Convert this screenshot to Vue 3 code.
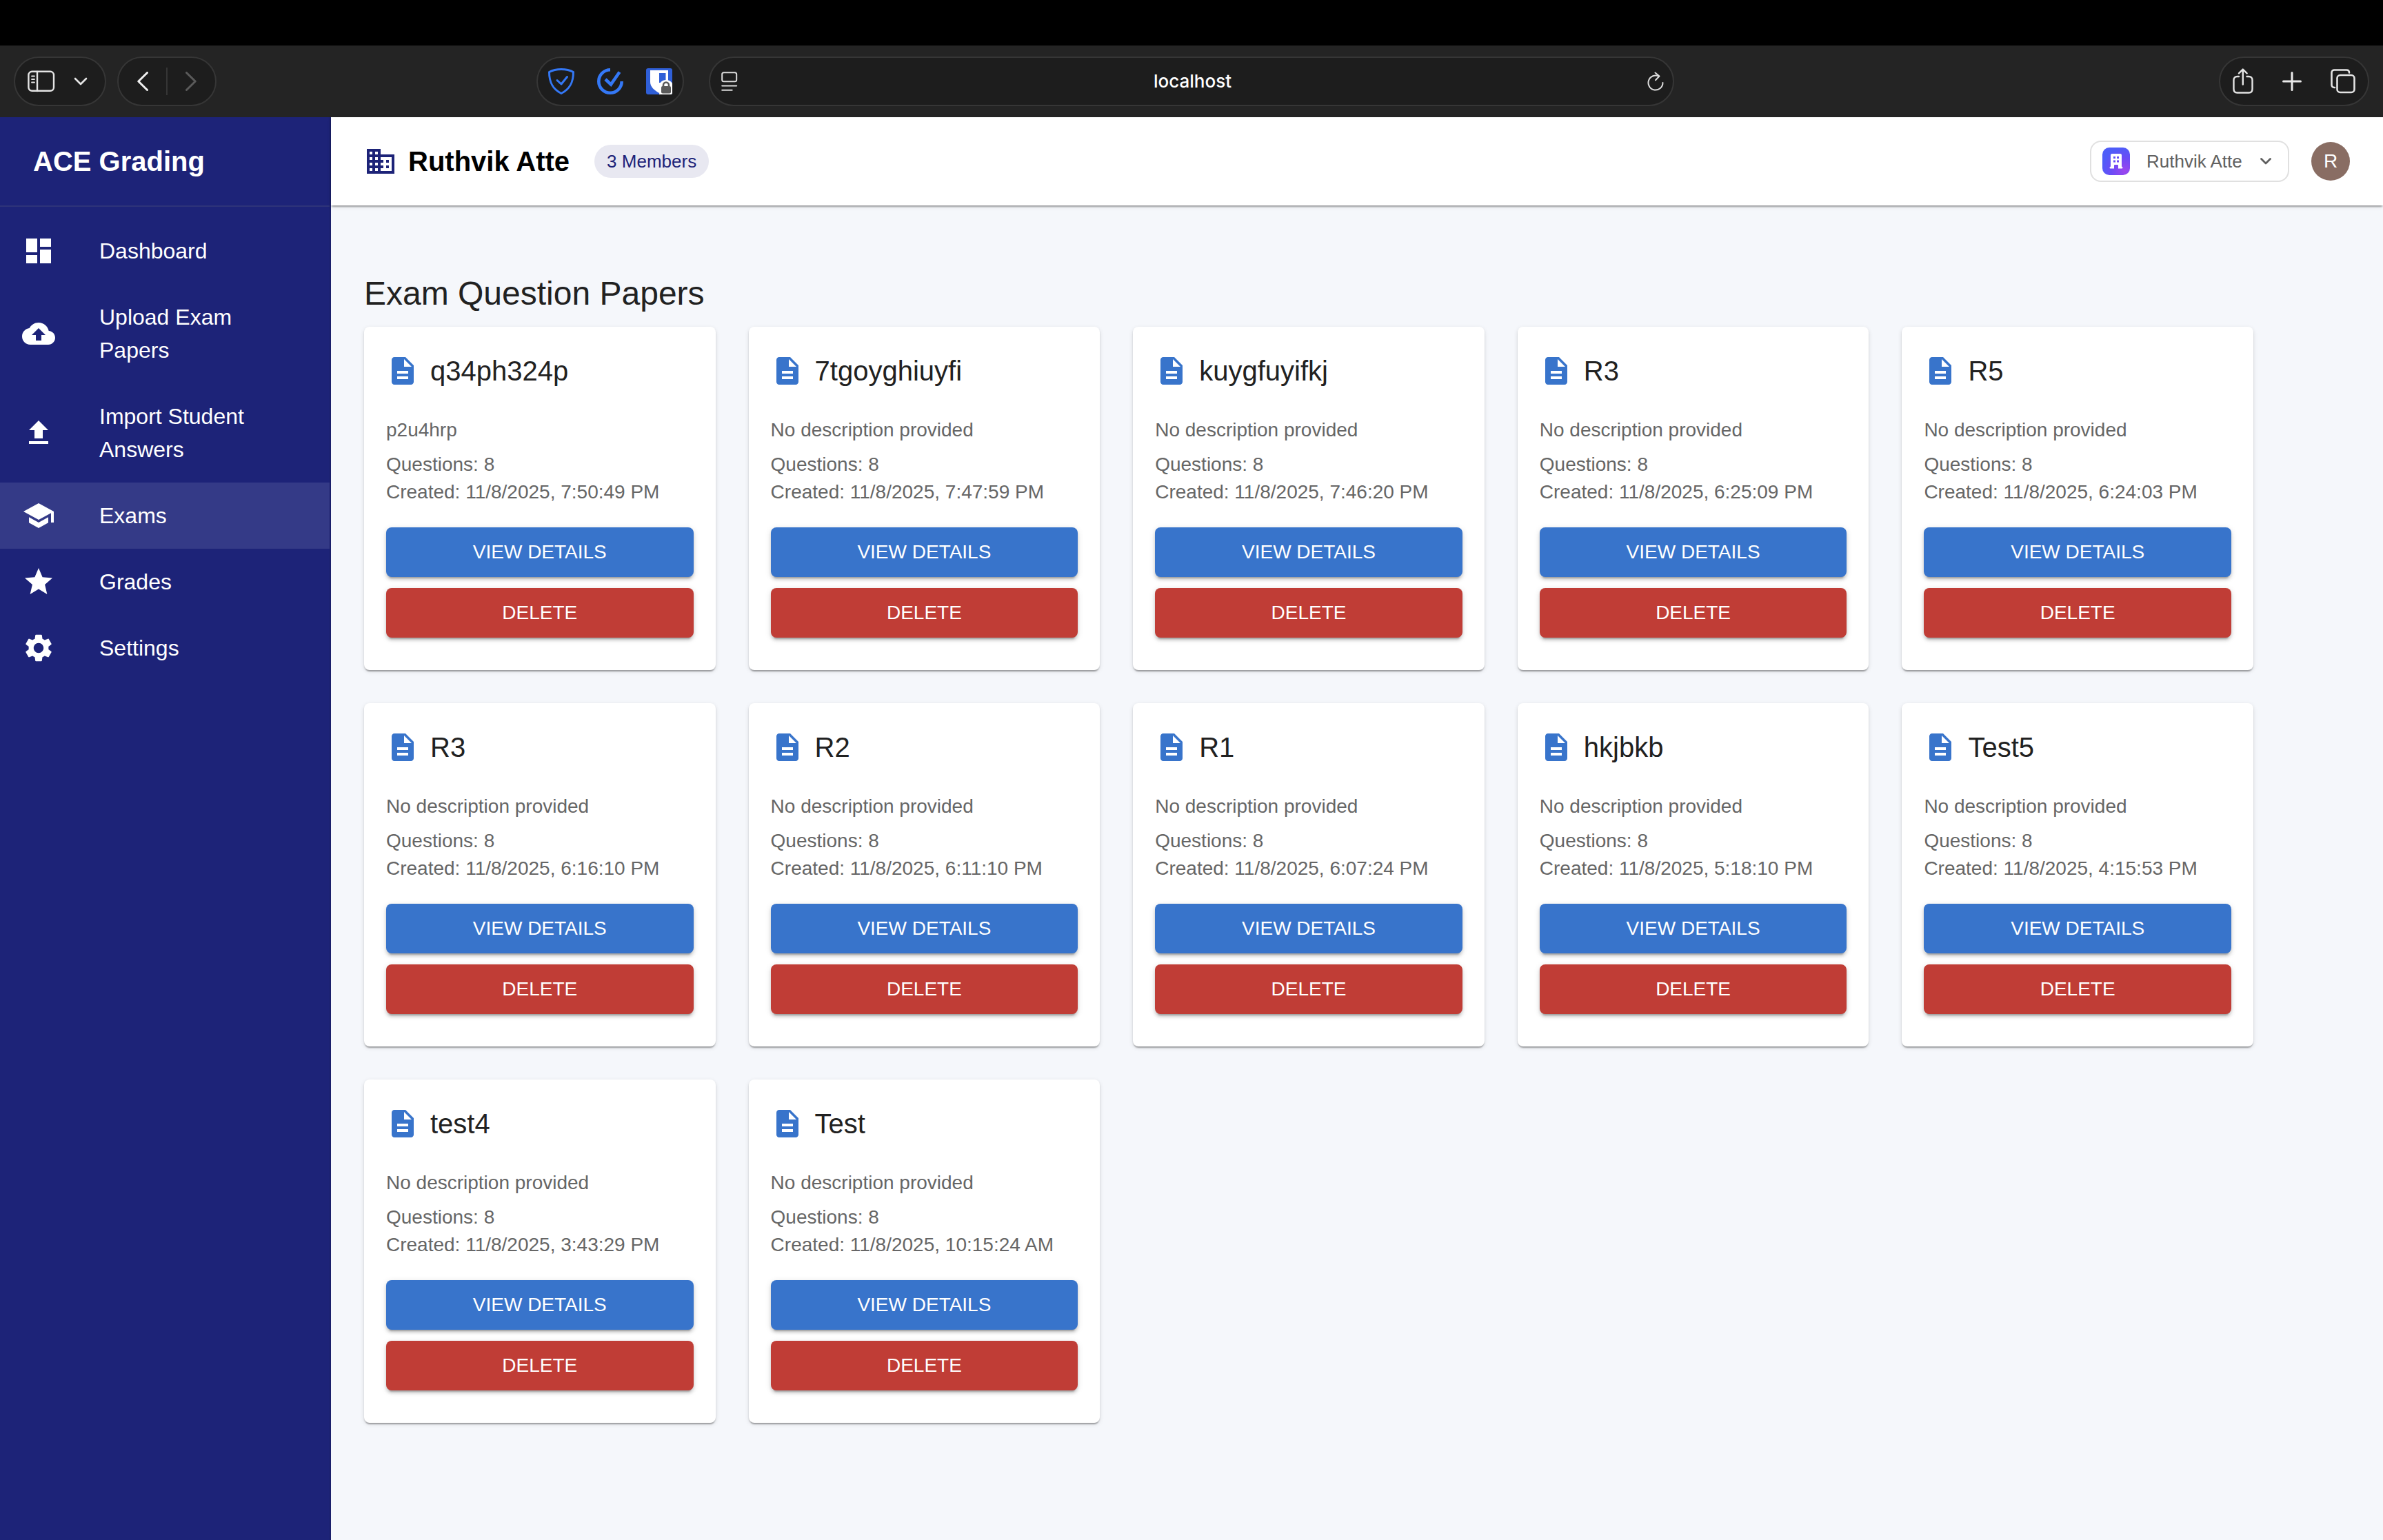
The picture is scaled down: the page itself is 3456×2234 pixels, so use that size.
<script setup>
import { ref } from 'vue'

const navItems = [
  { label: 'Dashboard', icon: 'M3 13h8V3H3zm0 8h8v-6H3zm10 0h8V11h-8zm0-18v6h8V3z' },
  { label: 'Upload Exam Papers', icon: 'M19.35 10.04C18.67 6.59 15.64 4 12 4 9.11 4 6.6 5.64 5.35 8.04 2.34 8.36 0 10.91 0 14c0 3.31 2.69 6 6 6h13c2.76 0 5-2.24 5-5 0-2.64-2.05-4.78-4.65-4.96M14 13v4h-4v-4H7l5-5 5 5z' },
  { label: 'Import Student Answers', icon: 'M5 20h14v-2H5zm0-10h4v6h6v-6h4l-7-7z' },
  { label: 'Exams', active: true, icon: 'M5 13.18v4L12 21l7-3.82v-4L12 17zM12 3 1 9l11 6 9-4.91V17h2V9z' },
  { label: 'Grades', icon: 'M12 17.27 18.18 21l-1.64-7.03L22 9.24l-7.19-.61L12 2 9.19 8.63 2 9.24l5.46 4.73L5.82 21z' },
  { label: 'Settings', icon: 'M19.14 12.94c.04-.3.06-.61.06-.94 0-.32-.02-.64-.07-.94l2.03-1.58c.18-.14.23-.41.12-.61l-1.92-3.32c-.12-.22-.37-.29-.59-.22l-2.39.96c-.5-.38-1.03-.7-1.62-.94l-.36-2.54c-.04-.24-.24-.41-.48-.41h-3.84c-.24 0-.43.17-.47.41l-.36 2.54c-.59.24-1.13.57-1.62.94l-2.39-.96c-.22-.08-.47 0-.59.22L2.74 8.87c-.12.21-.08.47.12.61l2.03 1.58c-.05.3-.09.63-.09.94s.02.64.07.94l-2.03 1.58c-.18.14-.23.41-.12.61l1.92 3.32c.12.22.37.29.59.22l2.39-.96c.5.38 1.03.7 1.62.94l.36 2.54c.05.24.24.41.48.41h3.84c.24 0 .44-.17.47-.41l.36-2.54c.59-.24 1.13-.56 1.62-.94l2.39.96c.22.08.47 0 .59-.22l1.92-3.32c.12-.22.07-.47-.12-.61zM12 15.6c-1.98 0-3.6-1.62-3.6-3.6s1.62-3.6 3.6-3.6 3.6 1.62 3.6 3.6-1.62 3.6-3.6 3.6' },
]

const fallback = 'No description provided'
const exams = [
  { title: 'q34ph324p', description: 'p2u4hrp', created: '11/8/2025, 7:50:49 PM' },
  { title: '7tgoyghiuyfi', created: '11/8/2025, 7:47:59 PM' },
  { title: 'kuygfuyifkj', created: '11/8/2025, 7:46:20 PM' },
  { title: 'R3', created: '11/8/2025, 6:25:09 PM' },
  { title: 'R5', created: '11/8/2025, 6:24:03 PM' },
  { title: 'R3', created: '11/8/2025, 6:16:10 PM' },
  { title: 'R2', created: '11/8/2025, 6:11:10 PM' },
  { title: 'R1', created: '11/8/2025, 6:07:24 PM' },
  { title: 'hkjbkb', created: '11/8/2025, 5:18:10 PM' },
  { title: 'Test5', created: '11/8/2025, 4:15:53 PM' },
  { title: 'test4', created: '11/8/2025, 3:43:29 PM' },
  { title: 'Test', created: '11/8/2025, 10:15:24 AM' },
]

const address = ref('localhost')
const organization = ref('Ruthvik Atte')
</script>

<template>
  <div class="screen">
    <div class="notch-strip"></div>

    <div class="browser-bar">
      <div class="bar-left">
        <div class="pill pill-sidebar">
          <button type="button" aria-label="Show sidebar">
            <svg width="40" height="32" viewBox="0 0 40 32" fill="none" stroke="#e4e4e4" stroke-width="2.4" stroke-linecap="round">
              <rect x="1.4" y="1.8" width="36.6" height="28" rx="5" />
              <path d="M14 2v28" />
              <path d="M6 8.5h4M6 13h4M6 17.500h4" stroke-width="1.800" />
            </svg>
          </button>
          <button type="button" aria-label="Tab groups">
            <svg width="20" height="12" viewBox="0 0 20 12" fill="none" stroke="#e4e4e4" stroke-width="2.600" stroke-linecap="round" stroke-linejoin="round">
              <path d="M2 2l8 8 8-8" />
            </svg>
          </button>
        </div>
        <div class="pill pill-history">
          <button type="button" aria-label="Back">
            <svg width="16" height="28" viewBox="0 0 16 28" fill="none" stroke="#f0f0f0" stroke-width="3" stroke-linecap="round" stroke-linejoin="round">
              <path d="M14.500 1.500L1.800 14l12.700 12.500" />
            </svg>
          </button>
          <span class="pill-divider"></span>
          <button type="button" aria-label="Forward">
            <svg width="16" height="28" viewBox="0 0 16 28" fill="none" stroke="#5a5a5a" stroke-width="3" stroke-linecap="round" stroke-linejoin="round">
              <path d="M1.500 1.500L14.200 14 1.500 26.500" />
            </svg>
          </button>
        </div>
        <div class="pill pill-extensions">
          <button type="button" aria-label="Shield">
            <svg width="38" height="38" viewBox="0 0 38 38" fill="none" stroke="#3478f6" stroke-width="3" stroke-linecap="round" stroke-linejoin="round">
              <path d="M19 1.500C13 1.500 6 3 1.500 5.500C1.500 20 6 30 19 36.500C32 30 36.500 20 36.500 5.500C32 3 25 1.500 19 1.500z" />
              <path d="M13 17.500l6 5.500 8.500-10.500" />
            </svg>
          </button>
          <button type="button" aria-label="Task check">
            <svg width="38" height="38" viewBox="0 0 38 38" fill="none" stroke="#3478f6" stroke-width="4.600">
              <path d="M19 2.300A16.700 16.700 0 1 0 35.700 19" />
              <path d="M12 16l8 7.500L32.500 5.500" />
            </svg>
          </button>
          <button type="button" aria-label="Password manager">
            <svg width="38" height="38" viewBox="0 0 38 38">
              <rect width="38" height="38" rx="3" fill="#2f5fd7" />
              <path d="M6 3h26v17c0 7-6 12-13 16C12 32 6 27 6 20z" fill="#fff" />
              <path d="M19 7h9.500v14H19z" fill="#2f5fd7" />
              <circle cx="29" cy="28" r="11" fill="#fff" />
              <path d="M20 28h18v8a2 2 0 0 1-2 2H19z" fill="#fff" />
              <rect x="22" y="26" width="14" height="10.500" rx="2" fill="#5a5a5a" />
              <path d="M25 27v-2.500a4 4 0 0 1 8 0V27" fill="none" stroke="#5a5a5a" stroke-width="2.600" />
            </svg>
          </button>
        </div>
      </div>

      <div class="pill address">
        <button type="button" aria-label="Page menu">
          <svg width="24" height="28" viewBox="0 0 24 28" fill="none" stroke="#dcdcdc" stroke-width="2" stroke-linecap="round">
            <rect x="1.200" y="1.200" width="21" height="13" rx="2.500" />
            <path d="M1.200 20.500h21M1.200 26.800h14.500" />
          </svg>
        </button>
        <input v-model="address" type="text" aria-label="Address" />
        <button type="button" aria-label="Reload">
          <svg width="24" height="28" viewBox="0 0 24 28" fill="none" stroke="#dcdcdc" stroke-width="2" stroke-linecap="round" stroke-linejoin="round">
            <path d="M22.500 16A10.500 10.500 0 1 1 17 6.800" />
            <path d="M11.500 1.500L17.500 6.500 12 12.200" />
          </svg>
        </button>
      </div>

      <div class="bar-right">
        <div class="pill pill-actions">
          <button type="button" aria-label="Share">
            <svg width="30" height="38" viewBox="0 0 30 38" fill="none" stroke="#e4e4e4" stroke-width="2.400" stroke-linecap="round" stroke-linejoin="round">
              <path d="M9 12H6.500C3.500 12 1.500 14 1.500 17v13c0 3.500 2 5.500 5 5.500h17c3 0 5-2 5-5.500V17c0-3-2-5-5-5H20.500" />
              <path d="M14.800 23.500V2M9 7.300L14.800 1.500l5.800 5.800" />
            </svg>
          </button>
          <button type="button" aria-label="New tab">
            <svg width="28" height="28" viewBox="0 0 28 28" fill="none" stroke="#e9e9e9" stroke-width="3" stroke-linecap="round">
              <path d="M14 1.500v25M1.500 14h25" />
            </svg>
          </button>
          <button type="button" aria-label="Tab overview">
            <svg width="36" height="36" viewBox="0 0 36 36" fill="none" stroke="#e4e4e4" stroke-width="2.600" stroke-linecap="round" stroke-linejoin="round">
              <rect x="9.500" y="9" width="25" height="25" rx="4.500" />
              <path d="M6 27H5.500C3 27 1.500 25.500 1.500 23V5.500C1.500 3 3 1.500 5.500 1.500h17.500c2.500 0 4 1.500 4 4" />
            </svg>
          </button>
        </div>
      </div>
    </div>

    <div class="app">
      <aside class="sidebar">
        <div class="brand">ACE Grading</div>
        <nav>
          <a v-for="item in navItems" :key="item.label" href="#" :class="{ active: item.active }">
            <svg class="mui-icon" viewBox="0 0 24 24"><path :d="item.icon" /></svg>
            <span>{{ item.label }}</span>
          </a>
        </nav>
      </aside>

      <div class="content">
        <header class="topbar">
          <svg class="mui-icon business" viewBox="0 0 24 24">
            <path d="M12 7V3H2v18h20V7zM6 19H4v-2h2zm0-4H4v-2h2zm0-4H4V9h2zm0-4H4V5h2zm4 12H8v-2h2zm0-4H8v-2h2zm0-4H8V9h2zm0-4H8V5h2zm10 12h-8v-2h2v-2h-2v-2h2v-2h-2V9h8zm-2-8h-2v2h2zm0 4h-2v2h2z" />
          </svg>
          <h1>Ruthvik Atte</h1>
          <span class="chip">3 Members</span>

          <label class="switcher">
            <svg width="40" height="40" viewBox="0 0 40 40">
              <defs>
                <radialGradient id="org-gradient" cx="0.8" cy="0.85" r="0.85">
                  <stop offset="0" stop-color="#9c46ee" />
                  <stop offset="0.55" stop-color="#6c4bf6" />
                  <stop offset="1" stop-color="#4f5df8" />
                </radialGradient>
              </defs>
              <rect width="40" height="40" rx="10" fill="url(#org-gradient)" />
              <path fill="#fff" fill-rule="evenodd" d="M14 9h12a2 2 0 0 1 2 2v16c0 .8.500 1 1 1.200.8.500.6 2.300-.6 2.300H23v-4.500a1 1 0 0 0-1-1h-4a1 1 0 0 0-1 1v4.500h-5.400c-1.200 0-1.400-1.800-.6-2.300.500-.2 1-.4 1-1.200V11a2 2 0 0 1 2-2zM16 13v3h3v-3zM21 13v3h3v-3zM16 18.500v3h3v-3zM21 18.500v3h3v-3z" />
            </svg>
            <select v-model="organization" aria-label="Organization">
              <option>Ruthvik Atte</option>
            </select>
            <svg width="16" height="12" viewBox="0 0 16 12" fill="none" stroke="#5f5f5f" stroke-width="2.800" stroke-linecap="round" stroke-linejoin="round">
              <path d="M1.500 2.500L8 9l6.500-6.500" />
            </svg>
          </label>
          <button type="button" class="avatar" aria-label="Account">R</button>
        </header>

        <main>
          <h2>Exam Question Papers</h2>
          <div class="exam-grid">
            <article v-for="exam in exams" :key="exam.created" class="card">
              <div class="card-title">
                <svg class="mui-icon" viewBox="0 0 24 24">
                  <path d="M14 2H6c-1.100 0-1.990.9-1.990 2L4 20c0 1.100.89 2 1.990 2H18c1.100 0 2-.9 2-2V8zm2 16H8v-2h8zm0-4H8v-2h8zm-3-5V3.500L18.500 9z" />
                </svg>
                <h3>{{ exam.title }}</h3>
              </div>
              <p class="description">{{ exam.description || fallback }}</p>
              <p>Questions: 8</p>
              <p>Created: {{ exam.created }}</p>
              <div class="card-actions">
                <button type="button" class="view">VIEW DETAILS</button>
                <button type="button" class="delete">DELETE</button>
              </div>
            </article>
          </div>
        </main>
      </div>
    </div>
  </div>
</template>

<style>
body {
  margin: 0;
  background: #f5f7fb;
}
</style>

<style scoped>
.screen {
  display: flex;
  flex-direction: column;
  min-height: 100vh;
  font-family: "Liberation Sans", Arial, sans-serif;
  color: #212121;
}

.screen *,
.screen {
  box-sizing: border-box;
}

button {
  border: 0;
  padding: 0;
  background: none;
  font-family: inherit;
  color: inherit;
  cursor: pointer;
}

svg {
  display: block;
  flex-shrink: 0;
}

h1,
h2,
h3,
p {
  margin: 0;
}

.notch-strip {
  height: 66px;
  background: #000;
}

.browser-bar {
  display: grid;
  grid-template-columns: 1fr 41% 1fr;
  align-items: center;
  height: 104px;
  padding: 0 20px;
  background: #242424;
}

.bar-left {
  display: flex;
  gap: 16px;
  padding-right: 36px;
}

.bar-right {
  display: flex;
  justify-content: flex-end;
}

.pill {
  display: flex;
  align-items: center;
  height: 72px;
  border: 2px solid #363636;
  border-radius: 36px;
  background: #1d1d1d;
}

.pill-sidebar {
  gap: 27px;
  padding: 0 25px 0 18px;
}

.pill-history {
  gap: 26px;
  padding: 0 27px;
}

.pill-divider {
  width: 2px;
  height: 40px;
  background: #363636;
}

.pill-extensions {
  gap: 33px;
  margin-left: auto;
  padding: 0 15px;
}

.pill-actions {
  gap: 42px;
  padding: 0 18px;
}

.address {
  padding: 0 13px 0 16px;
}

.address input {
  flex: 1;
  min-width: 0;
  border: 0;
  outline: 0;
  background: none;
  color: #fff;
  font: 500 26px/32px Inter, sans-serif;
  text-align: center;
}

.app {
  flex: 1;
  display: flex;
}

.mui-icon {
  width: 48px;
  height: 48px;
  fill: currentColor;
}

.sidebar {
  flex: 0 0 480px;
  border-right: 2px solid #1a1f6a;
  background: #1d2378;
  color: #fff;
}

.brand {
  height: 130px;
  padding: 32px 48px;
  border-bottom: 2px solid #2e3379;
  font-size: 40px;
  font-weight: 700;
  line-height: 64px;
}

nav {
  padding: 16px 0;
}

nav a {
  display: flex;
  align-items: center;
  gap: 64px;
  padding: 24px 48px 24px 32px;
  color: #fff;
  font-size: 32px;
  line-height: 48px;
  text-decoration: none;
}

nav a.active {
  background: #343a87;
}

.content {
  flex: 1;
  min-width: 0;
  background: #f5f7fb;
}

.topbar {
  display: flex;
  align-items: center;
  height: 128px;
  padding: 0 48px;
  background: #fff;
  box-shadow: 0 4px 2px -2px rgba(0, 0, 0, 0.2), 0 2px 2px rgba(0, 0, 0, 0.14), 0 2px 6px rgba(0, 0, 0, 0.12);
}

.business {
  color: #1d2378;
}

h1 {
  margin: 0 36px 0 16px;
  color: #000;
  font-size: 40px;
  line-height: 64px;
}

.chip {
  padding: 0 18px;
  border-radius: 24px;
  background: #e8e8f1;
  color: #1d2378;
  font-size: 26px;
  line-height: 48px;
}

.switcher {
  display: flex;
  align-items: center;
  gap: 24px;
  height: 60px;
  margin-left: auto;
  padding: 0 24px 0 16px;
  border: 2px solid #e0e0e0;
  border-radius: 16px;
}

.switcher select {
  appearance: none;
  border: 0;
  padding: 0;
  background: none;
  color: #616161;
  font: 26px/32px "Liberation Sans", Arial, sans-serif;
}

.avatar {
  width: 56px;
  height: 56px;
  margin-left: 32px;
  border-radius: 50%;
  background: #896d63;
  color: #fff;
  font-size: 28px;
}

main {
  padding: 96px 48px;
}

h2 {
  margin-bottom: 16px;
  font-size: 48px;
  font-weight: 400;
  line-height: 64px;
}

.exam-grid {
  display: grid;
  grid-template-columns: repeat(auto-fill, minmax(480px, 1fr));
  gap: 48px;
  max-width: 2740px;
}

.card {
  padding: 32px 32px 47px;
  border-radius: 8px;
  background: #fff;
  box-shadow: 0 4px 2px -2px rgba(0, 0, 0, 0.2), 0 2px 2px rgba(0, 0, 0, 0.14), 0 2px 6px rgba(0, 0, 0, 0.12);
}

.card-title {
  display: flex;
  align-items: center;
  gap: 16px;
  margin-bottom: 34px;
}

.card-title svg {
  color: #3874cb;
}

h3 {
  font-size: 40px;
  font-weight: 400;
  line-height: 64px;
}

.card p {
  color: #666;
  font-size: 28px;
  line-height: 40px;
}

.card .description {
  margin-bottom: 10px;
}

.card-actions {
  display: flex;
  flex-direction: column;
  gap: 16px;
  margin-top: 31px;
}

.card-actions button {
  height: 72px;
  border-radius: 8px;
  color: #fff;
  font-size: 28px;
  box-shadow: 0 6px 2px -4px rgba(0, 0, 0, 0.2), 0 4px 4px rgba(0, 0, 0, 0.14), 0 2px 10px rgba(0, 0, 0, 0.12);
}

.card-actions .view {
  background: #3874cb;
}

.card-actions .delete {
  background: #c03d36;
}
</style>
